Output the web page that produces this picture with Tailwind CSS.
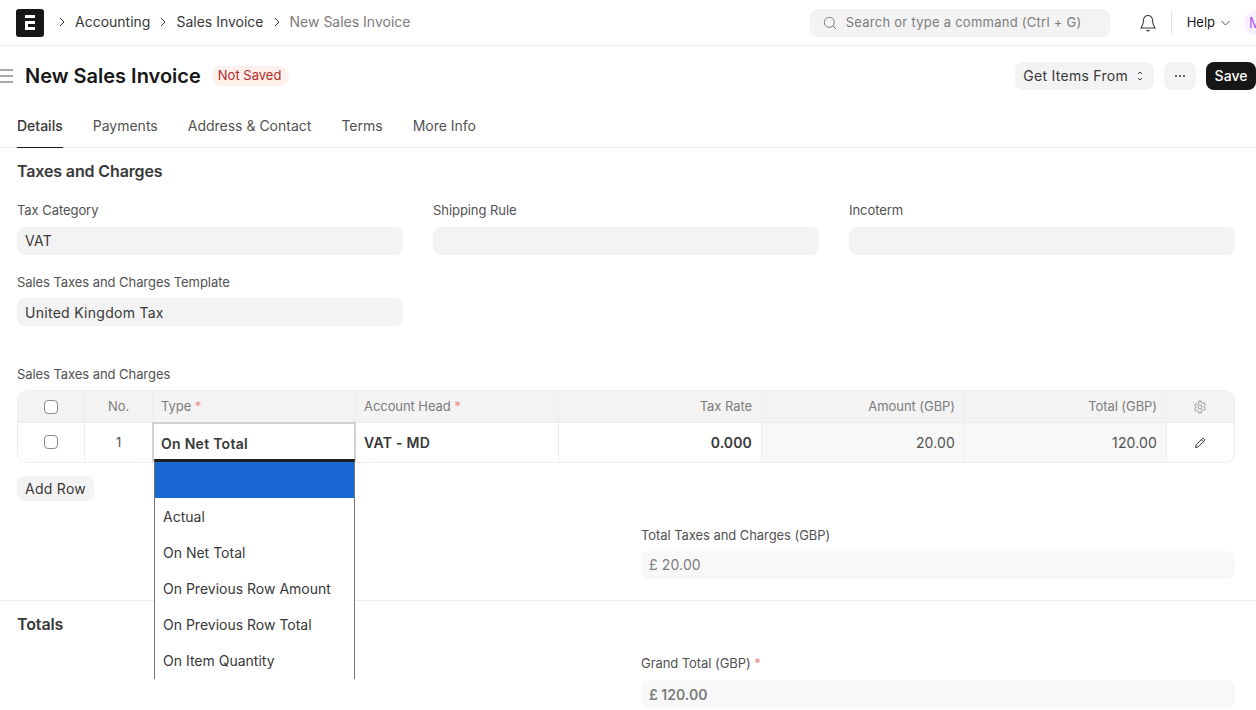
<!DOCTYPE html>
<html>

<head>
  <title>New Sales Invoice</title>
  <script src="https://cdn.jsdelivr.net/npm/@tailwindcss/browser@4"></script>
</head>

<body class="relative h-[710px] w-[1256px] overflow-hidden bg-white font-['Inter',sans-serif] text-[#383838]">
  <!-- navbar -->
  <header class="flex h-[46px] items-center border-b border-[#ededed] pl-4">
    <div class="flex h-7 w-7 items-center justify-center rounded-[3px] bg-[#171717]">
      <svg width="12" height="15" viewBox="0 0 12 15" fill="#fff">
        <path d="M1 0h10v3H1zM1 6h10v3H4v3h7v3H1z" />
      </svg>
    </div>
    <nav class="ml-[14px] flex items-center pb-px text-sm text-[#383838]">
      <svg class="mr-[9px]" width="8" height="10" viewBox="0 0 8 10" fill="none" stroke="#383838"><path d="M2 1l4 4-4 4" /></svg>
      <span>Accounting</span>
      <svg class="mx-[9px]" width="8" height="10" viewBox="0 0 8 10" fill="none" stroke="#383838"><path d="M2 1l4 4-4 4" /></svg>
      <span>Sales Invoice</span>
      <svg class="mx-[9px]" width="8" height="10" viewBox="0 0 8 10" fill="none" stroke="#383838"><path d="M2 1l4 4-4 4" /></svg>
      <span class="text-[#7c7c7c]">New Sales Invoice</span>
    </nav>
    <div class="ml-auto flex h-7 w-[300px] items-center rounded-lg bg-[#f3f3f3] pl-[13px] text-[13px] tracking-[0.02em] text-[#7c7c7c]">
      <svg width="14" height="14" viewBox="0 0 14 14" fill="none" stroke="#7c7c7c" stroke-width="1">
        <circle cx="6.300" cy="6.300" r="5" /><path d="M10 10l3 3" />
      </svg>
      <span class="ml-[9px]">Search or type a command (Ctrl + G)</span>
    </div>
    <svg class="ml-[30px]" width="16" height="18" viewBox="0 0 16 18" fill="none" stroke="#383838" stroke-width="1.100">
      <path d="M8 1.500a4.500 4.500 0 0 0-4.500 4.500c0 4.500-1.500 6.500-2.500 8h14c-1-1.500-2.500-3.500-2.500-8A4.500 4.500 0 0 0 8 1.500z" />
      <path d="M6.500 16.300c.8.600 2.200.600 3 0" />
    </svg>
    <div class="ml-[15px] h-6 w-px bg-[#e2e2e2]"></div>
    <span class="ml-[15px] text-[13px] text-[#171717]">Help</span>
    <svg class="ml-[6px]" width="9" height="6" viewBox="0 0 9 6" fill="none" stroke="#525252"><path d="M.5 1l4 4 4-4" /></svg>
    <div class="ml-[14px] -mr-3 flex h-6 w-6 shrink-0 items-center rounded-full bg-[#f8f0ff] pl-[5px] text-sm text-[#a855f7]">M</div>
  </header>

  <!-- page head -->
  <div class="flex h-[60px] items-center">
    <svg class="shrink-0" width="14" height="14" viewBox="0 0 14 14" stroke="#525252" stroke-width="1.100"><path d="M0 1h13M0 7h13M0 13h13" /></svg>
    <h1 class="ml-[11px] text-xl font-semibold text-[#171717]">New Sales Invoice</h1>
    <span class="ml-[10px] flex h-5 items-center rounded-full bg-[#fff0eb] pl-[7px] pr-2 text-[13px] text-[#b52a2a]">Not Saved</span>
    <div class="ml-auto flex h-7 items-center rounded-lg bg-[#f3f3f3] pl-2 pr-[11px] text-sm tracking-[0.02em]">
      Get Items From
      <svg class="ml-[9px]" width="6" height="10" viewBox="0 0 6 10" fill="none" stroke="#383838"><path d="M1 3l2-2 2 2M1 7l2 2 2-2" /></svg>
    </div>
    <div class="ml-[10px] flex h-7 w-8 items-center justify-center rounded-lg bg-[#f3f3f3]">
      <svg width="10" height="2" viewBox="0 0 10 2" fill="#383838"><circle cx="1" cy="1" r="1" /><circle cx="5" cy="1" r="1" /><circle cx="9" cy="1" r="1" /></svg>
    </div>
    <button class="ml-[10px] h-7 w-[50px] rounded-lg bg-[#171717] text-sm font-medium text-white">Save</button>
  </div>

  <!-- tabs -->
  <div class="flex h-[42px] gap-[30px] border-b border-[#ededed] px-[17px] text-sm text-[#525252]">
    <span class="-mb-px flex items-center border-b border-[#171717] pb-[2px] font-medium text-[#383838]">Details</span>
    <span class="flex items-center pb-[2px]">Payments</span>
    <span class="flex items-center pb-[2px]">Address &amp; Contact</span>
    <span class="flex items-center pb-[2px]">Terms</span>
    <span class="flex items-center pb-[2px]">More Info</span>
  </div>

  <!-- taxes and charges -->
  <section class="h-[452px] px-[17px] pt-[13px]">
    <h2 class="text-base/[20px] font-semibold tracking-[-0.008em]">Taxes and Charges</h2>

    <div class="mt-[21px] grid w-[1218px] grid-cols-3 gap-x-[30px]">
      <div>
        <label class="block text-[13px]/[16px] tracking-[-0.005em] text-[#525252]">Tax Category</label>
        <div class="mt-[9px] flex h-7 items-center rounded-lg bg-[#f3f3f3] px-2 text-sm tracking-[0.02em]">VAT</div>
      </div>
      <div>
        <label class="block text-[13px]/[16px] tracking-[-0.005em] text-[#525252]">Shipping Rule</label>
        <div class="mt-[9px] h-7 rounded-lg bg-[#f3f3f3]"></div>
      </div>
      <div>
        <label class="block text-[13px]/[16px] tracking-[-0.005em] text-[#525252]">Incoterm</label>
        <div class="mt-[9px] h-7 rounded-lg bg-[#f3f3f3]"></div>
      </div>
    </div>

    <div class="mt-[19px] w-[386px]">
      <label class="block text-[13px]/[16px] tracking-[-0.005em] text-[#525252]">Sales Taxes and Charges Template</label>
      <div class="mt-2 flex h-7 items-center rounded-lg bg-[#f3f3f3] px-2 pt-px text-sm tracking-[0.02em]">United Kingdom Tax</div>
    </div>

    <label class="mt-10 block text-[13px]/[16px] tracking-[-0.005em] text-[#525252]">Sales Taxes and Charges</label>

    <!-- child table -->
    <div class="mt-2 w-[1218px] overflow-hidden rounded-[10px] border border-[#ededed] text-[13px] tracking-[-0.005em]">
      <div class="grid h-8 grid-cols-[67px_68px_203px_203px_203px_203px_202px_1fr] border-b border-[#ededed] bg-[#f3f3f3] text-[#7c7c7c]">
        <div class="flex items-center justify-center border-r border-[#ededed]">
          <span class="h-[14px] w-[14px] rounded-[4px] border border-[#8a8a8a] bg-white"></span>
        </div>
        <div class="flex items-center justify-center border-r border-[#ededed]">No.</div>
        <div class="flex items-center border-r border-[#ededed] px-2">Type&nbsp;<span class="text-[#f08a8a]">*</span></div>
        <div class="flex items-center border-r border-[#ededed] px-2">Account Head&nbsp;<span class="text-[#f08a8a]">*</span></div>
        <div class="flex items-center justify-end border-r border-[#ededed] pr-[9px]">Tax Rate</div>
        <div class="flex items-center justify-end border-r border-[#ededed] pr-[9px]">Amount (GBP)</div>
        <div class="flex items-center justify-end border-r border-[#ededed] pr-[9px]">Total (GBP)</div>
        <div class="flex items-center justify-center pr-px">
          <svg width="14" height="14" viewBox="0 0 14 14" fill="none" stroke="#9a9a9a">
            <path d="M5.900 1h2.200l.4 1.700 1.100.6 1.700-.5 1.100 1.900-1.300 1.200v1.200l1.300 1.200-1.100 1.900-1.700-.5-1.100.6L8.100 13H5.900l-.4-1.700-1.100-.6-1.700.5-1.100-1.900 1.300-1.200V6.900L1.600 5.700l1.100-1.900 1.700.5 1.100-.6z" />
            <circle cx="7" cy="7" r="2" />
          </svg>
        </div>
      </div>
      <div class="grid h-[39px] grid-cols-[67px_68px_203px_203px_203px_203px_202px_1fr]">
        <div class="flex items-center justify-center border-r border-[#ededed] pb-[2px]">
          <span class="h-[14px] w-[14px] rounded-[4px] border border-[#8a8a8a] bg-white"></span>
        </div>
        <div class="flex items-center justify-center border-r border-[#ededed] text-[#525252]">1</div>
        <div class="relative z-10 -mt-px -ml-px flex h-[40px] w-[204px] items-center border-2 border-[#d0d0d0] pl-[7px] pt-1 text-sm font-semibold tracking-[0.02em] text-[#383838]">On Net Total</div>
        <div class="flex items-center border-r border-[#ededed] px-2 text-sm font-semibold tracking-[0.02em]">VAT - MD</div>
        <div class="flex items-center justify-end border-r border-[#ededed] pr-[9px] text-sm font-semibold tracking-[0.01em]">0.000</div>
        <div class="flex items-center justify-end border-r border-[#ededed] bg-[#f8f8f8] pr-[9px] text-sm tracking-[0.01em] text-[#525252]">20.00</div>
        <div class="flex items-center justify-end border-r border-[#ededed] bg-[#f8f8f8] pr-[9px] text-sm tracking-[0.01em] text-[#525252]">120.00</div>
        <div class="flex items-center justify-center pr-px">
          <svg width="12" height="12" viewBox="0 0 12 12" fill="none" stroke="#383838">
            <path d="M1.500 10.500l.6-2.700 6-6a1.200 1.200 0 0 1 1.700 0l.4.400a1.200 1.200 0 0 1 0 1.700l-6 6zM7.300 2.600l2.100 2.100" />
          </svg>
        </div>
      </div>
    </div>

    <button class="mt-[13px] block h-[25px] rounded-lg bg-[#f3f3f3] px-2 text-sm tracking-[0.02em]">Add Row</button>

    <div class="mt-[26px] ml-[624px] w-[594px]">
      <label class="block text-[13px]/[16px] tracking-[-0.005em] text-[#525252]">Total Taxes and Charges (GBP)</label>
      <div class="mt-2 flex h-7 items-center rounded-lg bg-[#f8f8f8] px-2 text-sm tracking-[0.01em] text-[#7c7c7c]">£ 20.00</div>
    </div>
  </section>

  <!-- totals -->
  <section class="border-t border-[#ededed] px-[17px] pt-[13px]">
    <h2 class="text-base/[20px] font-semibold tracking-[-0.008em]">Totals</h2>
    <div class="mt-[21px] ml-[624px] w-[594px]">
      <label class="block text-[13px]/[16px] tracking-[-0.005em] text-[#525252]">Grand Total (GBP)&nbsp;<span class="text-[#f08a8a]">*</span></label>
      <div class="mt-[9px] flex h-7 items-center rounded-lg bg-[#f8f8f8] px-2 pt-px text-sm font-semibold text-[#7c7c7c]">£ 120.00</div>
    </div>
  </section>

  <!-- open select list -->
  <ul class="absolute left-[154px] top-[459px] z-20 h-[220px] w-[201px] overflow-hidden border-x border-t-[3px] border-x-[#767676] border-t-[#1f1f1f] bg-white text-sm text-[#383838]">
    <li class="h-9 bg-[#1967d2]"></li>
    <li class="flex h-9 items-center pl-2 pt-[2px]">Actual</li>
    <li class="flex h-9 items-center pl-2 pt-[2px]">On Net Total</li>
    <li class="flex h-9 items-center pl-2 pt-[2px]">On Previous Row Amount</li>
    <li class="flex h-9 items-center pl-2 pt-[2px]">On Previous Row Total</li>
    <li class="flex h-9 items-center pl-2 pt-[2px]">On Item Quantity</li>
  </ul>
</body>

</html>
